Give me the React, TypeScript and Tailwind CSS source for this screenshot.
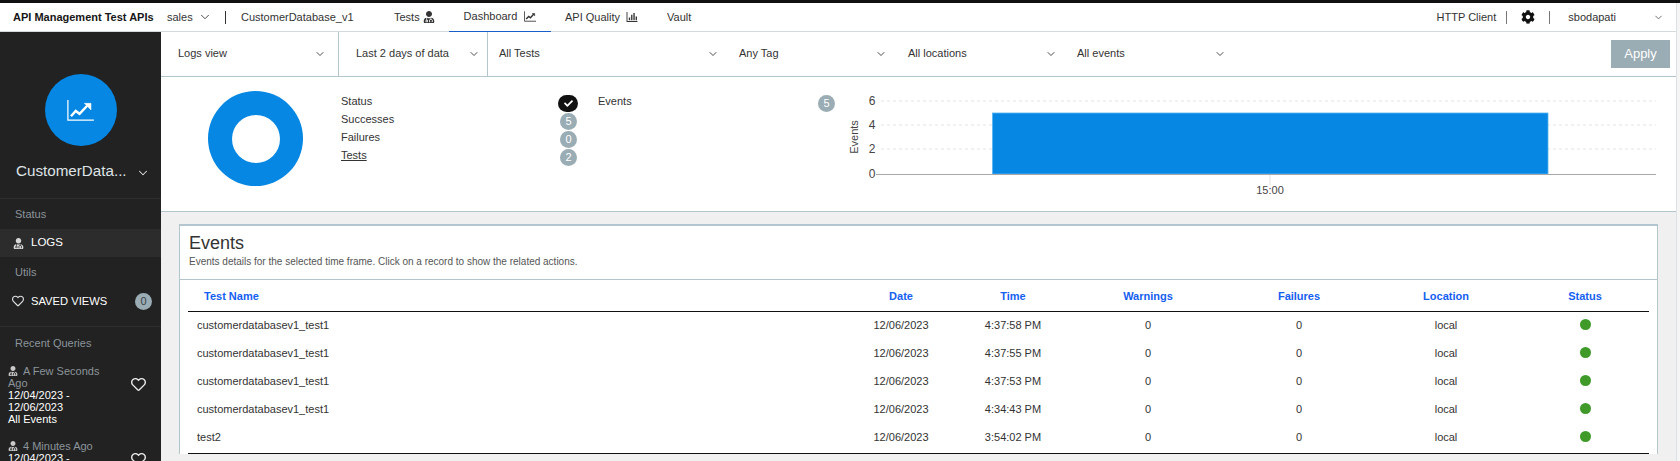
import React from 'react';
import { FaCog, FaCheck, FaUserMd, FaRegHeart } from 'react-icons/fa';
import { ChevronDown } from 'lucide-react';

const filters = [
  { label: 'Logs view', width: 'w-[178px]', pad: 'pl-[17px] pr-[12px]', border: true },
  { label: 'Last 2 days of data', width: 'w-[149px]', pad: 'pl-[17px] pr-[7px]', border: true },
  { label: 'All Tests', width: 'w-[240px]', pad: 'pl-[11px] pr-[9px]', border: false },
  { label: 'Any Tag', width: 'w-[169px]', pad: 'pl-[11px] pr-[10px]', border: false },
  { label: 'All locations', width: 'w-[169px]', pad: 'pl-[11px] pr-[9px]', border: false },
  { label: 'All events', width: 'w-[163px]', pad: 'pl-[11px] pr-[3px]', border: false },
];

const rows = [
  { name: 'customerdatabasev1_test1', time: '4:37:58 PM' },
  { name: 'customerdatabasev1_test1', time: '4:37:55 PM' },
  { name: 'customerdatabasev1_test1', time: '4:37:53 PM' },
  { name: 'customerdatabasev1_test1', time: '4:34:43 PM' },
  { name: 'test2', time: '3:54:02 PM' },
];

const gridCols = 'grid grid-cols-[651px_124px_100px_170px_132px_162px_116px]';

const Badge = ({ value }: { value: string }) => (
  <span className="mt-[4px] flex h-[17px] w-[17px] items-center justify-center rounded-full bg-[#9aacb4] text-[11px] text-white">
    {value}
  </span>
);

const TopBar = () => (
  <header className="flex h-[29px] items-center border-b border-[#d5dadd] bg-white text-[11px] text-[#333]">
    <span className="ml-[13px] w-[154px] font-bold text-[#161616]">API Management Test APIs</span>
    <span className="w-[30px]">sales</span>
    <ChevronDown className="ml-px h-[14px] w-[14px]" strokeWidth={1.5} />
    <span className="ml-[13px] h-[13px] w-px bg-[#333]" />
    <span className="ml-[15px] w-[153px]">CustomerDatabase_v1</span>
    <span className="w-[29px]">Tests</span>
    <FaUserMd className="h-[12px] w-[12px]" />
    <div className="ml-[14px] flex h-[29px] w-[102px] items-center justify-center gap-[7px] border-b border-[#1a5fc9]">
      <span>Dashboard</span>
      <svg viewBox="0 0 14 12" className="h-[11px] w-[12px]" fill="none" stroke="#333">
        <path d="M.5 0v11.5H14" />
        <path d="M2.5 9l3-3 2 1.5L11.5 3" strokeWidth="1.6" />
        <path d="M9.5 2.5h3v3" fill="#333" strokeWidth="0.6" />
      </svg>
    </div>
    <span className="ml-[14px] w-[60px]">API Quality</span>
    <svg viewBox="0 0 12 11" className="ml-px h-[10px] w-[12px]" fill="#333">
      <path d="M0 0h1v10h11v1H0z" />
      <path d="M2.5 6h1.500v3H2.500zM5 3h1.500v6H5zM7.500 1H9v8H7.500zM10 5h1.500v4H10z" />
    </svg>
    <span className="ml-[29px]">Vault</span>
    <span className="ml-auto">HTTP Client</span>
    <span className="ml-[10px] h-[13px] w-px bg-[#777]" />
    <FaCog className="ml-[14px] h-[14px] w-[14px] text-[#111]" />
    <span className="ml-[14px] h-[13px] w-px bg-[#777]" />
    <span className="ml-[18px]">sbodapati</span>
    <ChevronDown className="ml-[37px] mr-[12px] h-[11px] w-[11px]" strokeWidth={1.5} />
  </header>
);

const Sidebar = () => (
  <aside className="flex h-[429px] w-[161px] shrink-0 flex-col overflow-hidden bg-[#222222] text-[11px] text-white">
    <div className="mx-auto mt-[42px] flex h-[72px] w-[72px] shrink-0 items-center justify-center rounded-full bg-[#0587e3]">
      <svg viewBox="0 0 28 22" className="h-[21px] w-[27px]" fill="none" stroke="#fff">
        <path d="M.8 0v21.200H28" strokeWidth="1.300" />
        <path d="M4 17l5-5.500 4 3 8-8.500" strokeWidth="2.600" />
        <path d="M18 3.500h7v7z" fill="#fff" strokeWidth="0.500" />
      </svg>
    </div>
    <div className="mt-[10px] flex h-[30px] shrink-0 items-center pl-[16px] text-[#dfe3e6]">
      <span className="text-[15.2px]">CustomerData...</span>
      <ChevronDown className="ml-[9px] mt-[3px] h-[14px] w-[14px]" strokeWidth={1.75} />
    </div>
    <div className="mt-[12px] flex h-[31px] shrink-0 items-center border-t border-[#2e2e2e] pl-[15px] text-[#8b949a]">Status</div>
    <div className="flex h-[28px] shrink-0 items-center bg-[#2c2c2c] pl-[13px]">
      <FaUserMd className="h-[11px] w-[11px] text-[#d8d8d8]" />
      <span className="ml-[7px] text-[11.5px]">LOGS</span>
    </div>
    <div className="flex h-[30px] shrink-0 items-center pl-[15px] text-[#8b949a]">Utils</div>
    <div className="flex h-[28px] shrink-0 items-center pl-[12px]">
      <FaRegHeart className="h-[12px] w-[12px] text-[#dfe3e6]" />
      <span className="ml-[7px] text-[11.2px]">SAVED VIEWS</span>
      <span className="ml-auto mr-[9px] flex h-[17px] w-[17px] items-center justify-center rounded-full bg-[#9aacb4] text-[11px] text-[#3b4448]">0</span>
    </div>
    <div className="mt-[11px] flex h-[33px] shrink-0 items-center border-t border-[#2e2e2e] pl-[15px] text-[#8b949a]">Recent Queries</div>
    <div className="mt-[6px] flex shrink-0 pl-[8px] leading-[12px]">
      <div className="w-[112px]">
        <div className="text-[#8b949a]">
          <FaUserMd className="mr-[5px] inline h-[10px] w-[10px] align-[-1px] text-[#c9c9c9]" />
          A Few Seconds Ago
        </div>
        <div>12/04/2023 - 12/06/2023</div>
        <div>All Events</div>
      </div>
      <FaRegHeart className="ml-[11px] mt-[12px] h-[15px] w-[15px] text-[#e8e8e8]" />
    </div>
    <div className="mt-[15px] flex shrink-0 pl-[8px] leading-[12px]">
      <div className="w-[112px]">
        <div className="text-[#8b949a]">
          <FaUserMd className="mr-[5px] inline h-[10px] w-[10px] align-[-1px] text-[#c9c9c9]" />
          4 Minutes Ago
        </div>
        <div>12/04/2023 -</div>
      </div>
      <FaRegHeart className="ml-[11px] mt-[12px] h-[15px] w-[15px] text-[#e8e8e8]" />
    </div>
  </aside>
);

const FilterBar = () => (
  <div className="flex h-[45px] items-center border-b border-[#b3c5cd] bg-white text-[11px] text-[#333]">
    {filters.map((f) => (
      <div
        key={f.label}
        className={`flex h-full items-center justify-between ${f.width} ${f.pad} ${f.border ? 'border-r border-[#b3c5cd]' : ''}`}
      >
        <span className="mb-[2px]">{f.label}</span>
        <ChevronDown className="h-[12px] w-[12px]" strokeWidth={1.75} />
      </div>
    ))}
    <button className="ml-auto mr-[6px] h-[28px] w-[59px] bg-[#9aacb4] text-[13px] text-white">Apply</button>
  </div>
);

const EventsChart = () => (
  <svg viewBox="0 0 830 134" className="ml-[-9px] h-[134px] w-[830px] shrink-0" fontFamily="'Liberation Sans', sans-serif" fontSize="11" fill="#444">
    {[24, 48, 72].map((y) => (
      <line key={y} x1="55" x2="830" y1={y} y2={y} stroke="#e3e3e3" strokeDasharray="3 3" />
    ))}
    <rect x="166.500" y="36" width="555.500" height="61" fill="#0587e3" stroke="#58b3f0" strokeWidth="0.800" />
    <line x1="50" x2="830" y1="97.500" y2="97.500" stroke="#a8a8a8" />
    <line x1="444" x2="444" y1="98" y2="108" stroke="#e3e3e3" />
    {[['6', 24], ['4', 48], ['2', 72], ['0', 97]].map(([t, y]) => (
      <text key={t} x="46" y={Number(y) + 4} fontSize="12" textAnchor="middle">{t}</text>
    ))}
    <text x="444" y="117" textAnchor="middle">15:00</text>
    <text transform="translate(32 60) rotate(-90)" textAnchor="middle">Events</text>
  </svg>
);

const Summary = () => (
  <section className="flex h-[135px] border-b border-[#b3c5cd] bg-white text-[11px] text-[#333]">
    <div className="ml-[47px] mt-[14px] flex h-[95px] w-[95px] shrink-0 items-center justify-center rounded-full bg-[#0587e3]">
      <div className="h-[48px] w-[48px] rounded-full bg-white" />
    </div>
    <div className="ml-[38px] mt-[15px] w-[237px] shrink-0">
      <div className="flex h-[18px] items-center justify-between">
        <span>Status</span>
        <span className="mt-[4px] flex h-[17px] w-[20px] items-center justify-center rounded-full bg-[#111]">
          <FaCheck className="h-[9px] w-[9px] text-white" />
        </span>
      </div>
      <div className="flex h-[18px] items-center justify-between pr-px"><span>Successes</span><Badge value="5" /></div>
      <div className="flex h-[18px] items-center justify-between pr-px"><span>Failures</span><Badge value="0" /></div>
      <div className="flex h-[18px] items-center justify-between pr-px"><span className="underline">Tests</span><Badge value="2" /></div>
    </div>
    <div className="ml-[20px] mt-[15px] flex h-[18px] w-[237px] shrink-0 items-center justify-between">
      <span>Events</span>
      <Badge value="5" />
    </div>
    <EventsChart />
  </section>
);

const EventsCard = () => (
  <section className="ml-[18px] mr-[18px] mt-[12px] border-x border-t-2 border-[#b3c5cd] bg-white text-[11px] text-[#333]">
    <div className="h-[54px] border-b border-[#b3c5cd] pl-[9px] pt-[7px]">
      <h2 className="text-[18px] leading-[20px] text-[#333]">Events</h2>
      <p className="mt-[3px] text-[10px] leading-[12px] text-[#555]">
        Events details for the selected time frame. Click on a record to show the related actions.
      </p>
    </div>
    <div className="mx-[8px]">
      <div className={`${gridCols} h-[32px] items-center border-b border-[#111] pt-px text-center font-bold text-[#1560f0]`}>
        <span className="pl-[16px] text-left">Test Name</span>
        <span>Date</span>
        <span>Time</span>
        <span>Warnings</span>
        <span>Failures</span>
        <span>Location</span>
        <span>Status</span>
      </div>
      <div className="border-b border-[#111] pb-px">
        {rows.map((r, i) => (
          <div key={i} className={`${gridCols} h-[28px] items-center pb-[2px] text-center`}>
            <span className="pl-[9px] text-left">{r.name}</span>
            <span>12/06/2023</span>
            <span>{r.time}</span>
            <span>0</span>
            <span>0</span>
            <span>local</span>
            <span className="mb-[2px] flex justify-center">
              <span className="h-[11px] w-[11px] rounded-full bg-[#3f9a2a]" />
            </span>
          </div>
        ))}
      </div>
    </div>
  </section>
);

export default function App() {
  return (
    <div className="h-[461px] w-[1680px] overflow-hidden bg-[#f0f0f0] font-['Liberation_Sans',Arial,sans-serif]">
      <div className="h-[3px] bg-[#111]" />
      <div className="flex">
        <div className="w-[1676px] shrink-0">
          <TopBar />
          <div className="flex">
            <Sidebar />
            <main className="min-w-0 flex-1">
              <FilterBar />
              <Summary />
              <EventsCard />
            </main>
          </div>
        </div>
        <div className="h-[458px] w-[4px] border-l border-[#dde1e3] bg-[#f5f5f5]" />
      </div>
    </div>
  );
}
